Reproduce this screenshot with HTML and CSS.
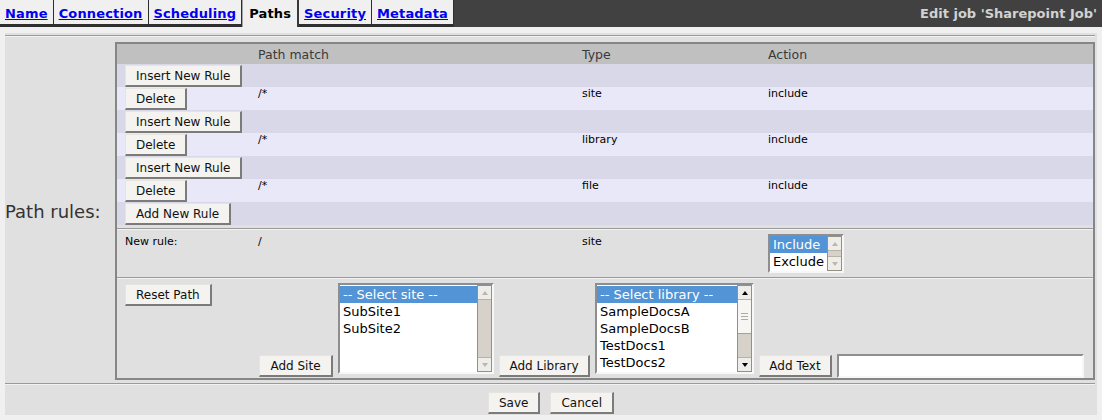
FILE: index.html
```html
<!DOCTYPE html>
<html lang="en">
<head>
<meta charset="utf-8">
<title>Edit job 'Sharepoint Job'</title>
<link rel="stylesheet" href="styles.css">
</head>
<body>
<header class="topbar">
  <nav class="tabs">
    <a class="tab" href="#">Name</a>
    <a class="tab" href="#">Connection</a>
    <a class="tab" href="#">Scheduling</a>
    <span class="tab active">Paths</span>
    <a class="tab" href="#">Security</a>
    <a class="tab" href="#">Metadata</a>
  </nav>
  <div class="title">Edit job 'Sharepoint Job'</div>
</header>

<main class="content">
  <div class="displaytable">
    <div class="sep sep-top"><hr class="line"></div>
    <div class="fieldrow">
      <div class="label">Path rules:</div>
      <div class="box">
        <table class="rules">
          <colgroup><col class="c1"><col class="c2"><col class="c3"><col class="c4"></colgroup>
          <thead>
            <tr><th></th><th>Path match</th><th>Type</th><th>Action</th></tr>
          </thead>
          <tbody>
            <tr class="dark"><td class="btncell"><button class="btn">Insert New Rule</button></td><td></td><td></td><td></td></tr>
            <tr class="light"><td class="btncell"><button class="btn">Delete</button></td><td>/*</td><td>site</td><td>include</td></tr>
            <tr class="dark"><td class="btncell"><button class="btn">Insert New Rule</button></td><td></td><td></td><td></td></tr>
            <tr class="light"><td class="btncell"><button class="btn">Delete</button></td><td>/*</td><td>library</td><td>include</td></tr>
            <tr class="dark"><td class="btncell"><button class="btn">Insert New Rule</button></td><td></td><td></td><td></td></tr>
            <tr class="light"><td class="btncell"><button class="btn">Delete</button></td><td>/*</td><td>file</td><td>include</td></tr>
            <tr class="dark"><td class="btncell"><button class="btn">Add New Rule</button></td><td></td><td></td><td></td></tr>
            <tr class="septr sep1"><td colspan="4"><hr class="line"></td></tr>
            <tr class="newrule">
              <td class="first">New rule:</td>
              <td>/</td>
              <td>site</td>
              <td class="lbcell">
                <div class="listbox lb-action" role="listbox">
                  <ul class="opts"><li class="sel">Include</li><li>Exclude</li></ul>
                  <div class="sb"><span class="arr up"></span><span class="trough"></span><span class="arr down"></span></div>
                </div>
              </td>
            </tr>
            <tr class="septr sep2"><td colspan="4"><hr class="line"></td></tr>
            <tr class="addrow">
              <td colspan="4">
                <div class="adders">
                  <div class="resetcell"><button class="btn">Reset Path</button></div>
                  <button class="btn addbtn add-site">Add Site</button>
                  <div class="listbox lb-site" role="listbox">
                    <ul class="opts"><li class="sel">-- Select site --</li><li>SubSite1</li><li>SubSite2</li></ul>
                    <div class="sb"><span class="arr up"></span><span class="trough"></span><span class="arr down"></span></div>
                  </div>
                  <button class="btn addbtn add-lib">Add Library</button>
                  <div class="listbox lb-lib" role="listbox">
                    <ul class="opts"><li class="sel">-- Select library --</li><li>SampleDocsA</li><li>SampleDocsB</li><li>TestDocs1</li><li>TestDocs2</li></ul>
                    <div class="sb on"><span class="arr up"></span><span class="thumb"></span><span class="trough"></span><span class="arr down"></span></div>
                  </div>
                  <button class="btn addbtn add-text">Add Text</button>
                  <input class="txt" type="text" aria-label="Path text">
                </div>
              </td>
            </tr>
          </tbody>
        </table>
      </div>
    </div>
    <div class="sep sep-bottom"><hr class="line"></div>
    <div class="actions">
      <button class="btn">Save</button>
      <button class="btn">Cancel</button>
    </div>
  </div>
</main>
</body>
</html>
```

FILE: styles.css
```css
html, body {
  margin: 0;
  padding: 0;
}
body {
  background: #f0f0f0;
  font-family: "DejaVu Sans", Verdana, sans-serif;
  color: #000;
}

/* ---------- top bar ---------- */
.topbar {
  display: flex;
  justify-content: space-between;
  height: 27px;
  background: #414141;
}
.tabs {
  display: flex;
}
.tab {
  display: block;
  box-sizing: border-box;
  height: 27px;
  padding: 6px 5px 0;
  background: #f0f0f0;
  border-right: 1px solid #2e2e2e;
  border-bottom: 3px solid #2e2e2e;
  font-size: 13px;
  letter-spacing: 0.15px;
  font-weight: bold;
  line-height: 15px;
  color: #0000ee;
  text-decoration: underline;
  white-space: nowrap;
}
.tab.active {
  color: #000;
  text-decoration: none;
  border-bottom: 0;
  border-left: 1px solid #a4a4a4;
  border-right: 2px solid #383838;
  padding: 6px 6px 0;
}
.title {
  padding: 6px 5px 0;
  font-size: 13px;
  font-weight: bold;
  line-height: 15px;
  color: #d2d2d2;
  white-space: nowrap;
}

/* ---------- content ---------- */
.content {
  padding: 6px 5px 0;
}
.displaytable {
  background: #e0e0e0;
}
.line {
  margin: 0;
  height: 0;
  border: 0;
  border-top: 1px solid #9a9a9a;
  border-bottom: 1px solid #f2f2f2;
}
.sep-top {
  padding: 2px 2px 5px 0;
}
.sep-bottom {
  padding: 3px 2px 0 0;
}
.fieldrow {
  display: flex;
  padding-right: 2px;
}
.label {
  flex: none;
  width: 110px;
  align-self: center;
  font-size: 18px;
  color: #333;
  white-space: nowrap;
}
.box {
  flex: 1;
  border: 2px solid #868686;
}

/* ---------- rules table ---------- */
.rules {
  width: 100%;
  border-collapse: collapse;
  table-layout: fixed;
}
.rules .c1 { width: 141px; }
.rules .c2 { width: 324px; }
.rules .c3 { width: 186px; }
.rules th {
  height: 20px;
  padding: 0;
  background: #c0c0c0;
  font-size: 12.5px;
  font-weight: normal;
  color: #3a3a3a;
  text-align: left;
  vertical-align: middle;
}
.rules td {
  padding: 0;
  font-size: 11px;
  line-height: 13px;
  vertical-align: top;
}
.rules tr.dark td { background: #d8d8e8; }
.rules tr.light td { background: #e8e8f8; }
.rules td.btncell {
  height: 23px;
  box-sizing: border-box;
  padding: 1px 0 0 8px;
}
.rules tr.sep1 td {
  padding: 3px 0 0;
}
.rules tr.sep2 td {
  padding: 1px 0 0;
}
.rules tr.newrule td {
  box-sizing: border-box;
  height: 46px;
  padding-top: 5px;
}
.rules tr.newrule td.first {
  padding-left: 8px;
}
.rules tr.newrule td.lbcell {
  padding-top: 4px;
}
.rules tr.addrow td {
  padding: 0;
}

/* ---------- buttons ---------- */
.btn {
  box-sizing: border-box;
  height: 22px;
  margin: 0;
  padding: 0 10px;
  font-family: "DejaVu Sans", Verdana, sans-serif;
  font-size: 12px;
  line-height: 18px;
  color: #111;
  background: #f4f3ef;
  border: 1px solid;
  border-color: #e6e4e0 #7b7b7b #7b7b7b #e6e4e0;
  border-right-width: 2px;
  border-bottom-width: 2px;
  border-radius: 0;
  white-space: nowrap;
}

/* ---------- list boxes ---------- */
.listbox {
  display: flex;
  box-sizing: border-box;
  background: #fff;
  border: 2px solid;
  border-color: #8e8e8e #f7f7f7 #f7f7f7 #8e8e8e;
}
.opts {
  flex: 1;
  margin: 0;
  padding: 0;
  list-style: none;
  font-size: 13px;
  line-height: 17px;
  overflow: hidden;
}
.opts li {
  padding-left: 3px;
  white-space: nowrap;
}
.opts li.sel {
  background: #5294d5;
  color: #fff;
}
.lb-action {
  width: 76px;
  height: 39px;
}
.lb-site {
  width: 156px;
  height: 91px;
}
.lb-lib {
  width: 159px;
  height: 91px;
}
.lb-site .opts,
.lb-lib .opts {
  padding-top: 1px;
}
.sb {
  flex: none;
  box-sizing: border-box;
  width: 15px;
  display: flex;
  flex-direction: column;
  background: #d6d2ca;
  border: 1px solid #958f84;
}
.arr {
  flex: none;
  height: 13px;
  background: #efedea;
  display: flex;
  align-items: center;
  justify-content: center;
}
.arr.up { border-bottom: 1px solid #b8b2a7; }
.arr.down { border-top: 1px solid #b8b2a7; }
.trough { flex: 1; }
.arr::before {
  content: "";
  width: 0;
  height: 0;
  border-left: 3px solid transparent;
  border-right: 3px solid transparent;
}
.arr.up::before { border-bottom: 4px solid #bbb7af; }
.arr.down::before { border-top: 4px solid #bbb7af; }
.sb.on .arr.up::before { border-bottom-color: #000; }
.sb.on .arr.down::before { border-top-color: #000; }
.thumb {
  flex: none;
  height: 33px;
  background: #f7f6f3;
  border-bottom: 1px solid #a8a196;
  display: flex;
  align-items: center;
  justify-content: center;
}
.thumb::before {
  content: "";
  width: 7px;
  height: 1px;
  background: #b0aaa0;
  box-shadow: 0 -3px 0 #b0aaa0, 0 3px 0 #b0aaa0;
}

/* ---------- add row ---------- */
.adders {
  display: flex;
  align-items: flex-end;
  gap: 5px;
  padding-top: 4px;
}
.resetcell {
  flex: none;
  box-sizing: border-box;
  width: 137px;
  padding-left: 8px;
  align-self: flex-start;
  margin-top: 1px;
}
.addbtn {
  flex: none;
  margin-bottom: 1px;
  padding: 0;
}
.add-site { width: 74px; }
.add-lib { width: 91px; }
.add-text { width: 73px; }
.adders .listbox {
  margin-bottom: 4px;
  flex: none;
}
.txt {
  box-sizing: border-box;
  width: 247px;
  height: 24px;
  margin: 0;
  padding: 0 2px;
  background: #fff;
  border: 2px solid;
  border-color: #8e8e8e #f7f7f7 #f7f7f7 #8e8e8e;
  border-radius: 0;
  font-family: "DejaVu Sans", Verdana, sans-serif;
  font-size: 12px;
}

/* ---------- action buttons ---------- */
.actions {
  display: flex;
  justify-content: center;
  gap: 10px;
  padding: 7px 0 1px;
}
```
